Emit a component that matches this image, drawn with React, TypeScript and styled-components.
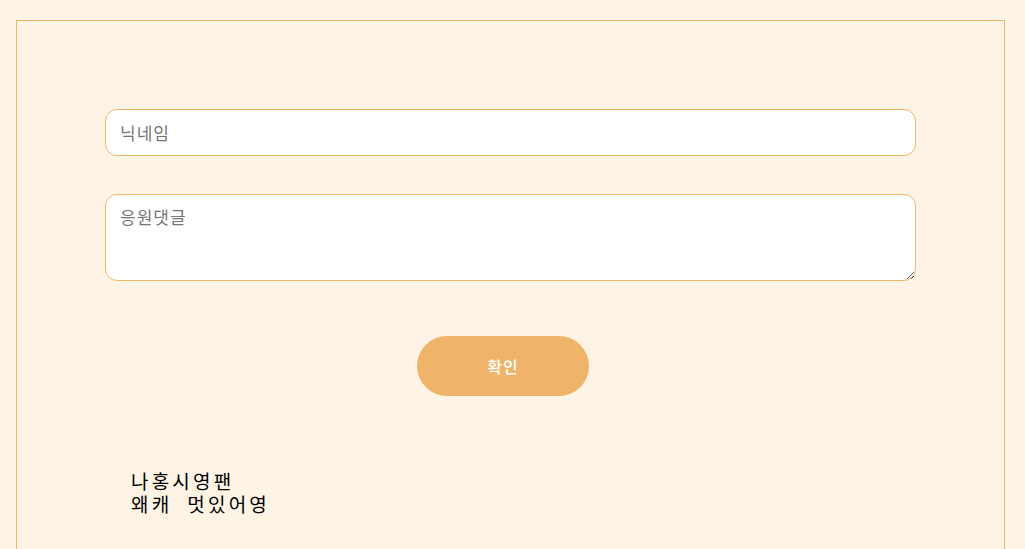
import React, { useState } from "react";
import styled, { createGlobalStyle } from "styled-components";

const GlobalStyle = createGlobalStyle`
  html, body {
    margin: 0;
    padding: 0;
    background-color: #fdf4e5;
    font-family: "Noto Sans CJK KR", "Noto Sans", sans-serif;
  }
`;

interface Comment {
  id: number;
  nickname: string;
  text: string;
}

const App: React.FC = () => {
  const [nickname, setNickname] = useState<string>("");
  const [text, setText] = useState<string>("");
  const [comments, setComments] = useState<Comment[]>([
    { id: 1, nickname: "나홍시영팬", text: "왜캐  멋있어영" },
  ]);

  const submit = () => {
    if (!nickname || !text) return;
    setComments([...comments, { id: Date.now(), nickname, text }]);
    setNickname("");
    setText("");
  };

  return (
    <>
      <GlobalStyle />
      <Board>
        <Form>
          <NicknameInput
            type="text"
            placeholder="닉네임"
            value={nickname}
            onChange={(e) => setNickname(e.target.value)}
          />
          <CommentArea
            placeholder="응원댓글"
            value={text}
            onChange={(e) => setText(e.target.value)}
          />
          <ButtonRow>
            <SubmitButton onClick={submit}>확인</SubmitButton>
          </ButtonRow>
        </Form>
        <CommentList>
          {comments.map((c) => (
            <CommentItem key={c.id}>
              <CommentLine>{c.nickname}</CommentLine>
              <CommentLine>{c.text}</CommentLine>
            </CommentItem>
          ))}
        </CommentList>
      </Board>
    </>
  );
};

const Board = styled.div`
  box-sizing: border-box;
  width: 989px;
  min-height: 540px;
  margin: 20px 0 0 16px;
  border: 1px solid #f4b461;
  padding: 88px 88px 0;
`;

const Form = styled.div`
  display: flex;
  flex-direction: column;
`;

const fieldBase = `
  box-sizing: border-box;
  width: 100%;
  border: 1px solid #f3b667;
  border-radius: 12px;
  background-color: #ffffff;
  font-family: "Noto Sans CJK KR", "Noto Sans", sans-serif;
  font-size: 17px;
  letter-spacing: 1px;
  color: #333;
  outline: none;
  &::placeholder {
    color: #767676;
  }
`;

const NicknameInput = styled.input`
  ${fieldBase}
  height: 47px;
  padding: 0 14px;
`;

const CommentArea = styled.textarea`
  ${fieldBase}
  height: 87px;
  margin-top: 38px;
  padding: 9px 14px;
  resize: vertical;
`;

const ButtonRow = styled.div`
  display: flex;
  justify-content: center;
  margin-top: 55px;
`;

const SubmitButton = styled.button`
  width: 172px;
  height: 60px;
  margin-right: 15px;
  border: none;
  border-radius: 30px;
  background-color: #f0b36a;
  color: #ffffff;
  font-family: "Noto Sans CJK KR", "Noto Sans", sans-serif;
  font-size: 16px;
  font-weight: 500;
  letter-spacing: 1px;
  cursor: pointer;
`;

const CommentList = styled.div`
  margin-top: 73px;
  padding-left: 26px;
`;

const CommentItem = styled.div`
  display: flex;
  flex-direction: column;
`;

const CommentLine = styled.div`
  font-size: 19px;
  line-height: 23px;
  letter-spacing: 3.2px;
  color: #000;
  white-space: pre-wrap;
`;

export default App;
